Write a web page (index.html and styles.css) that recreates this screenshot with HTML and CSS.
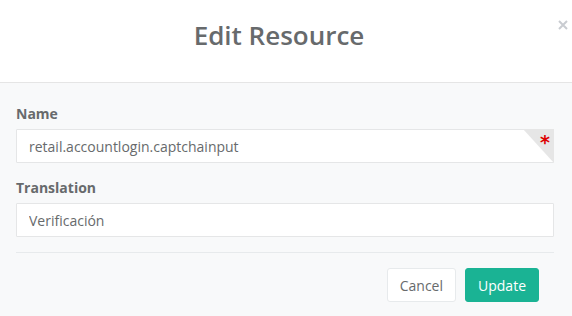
FILE: index.html
```html
<!DOCTYPE html>
<html lang="en">
<head>
    <meta charset="UTF-8">
    <meta name="viewport" content="width=device-width, initial-scale=1.0">
    <title>Edit Resource</title>
    <link rel="stylesheet" href="styles.css">
</head>
<body>
    <div class="modal">
        <!-- Header -->
        <div class="modal-header">
            <button class="close" type="button" aria-label="Close">
                <svg width="10" height="10" viewBox="0 0 10 10">
                    <path d="M1 1 L9 9 M9 1 L1 9" stroke="#c9ccd1" stroke-width="2" fill="none"/>
                </svg>
            </button>
            <h4 class="modal-title">Edit Resource</h4>
        </div>

        <!-- Body -->
        <div class="modal-body">
            <div class="form-group">
                <label for="name">Name</label>
                <div class="input-wrap">
                    <input type="text" id="name" class="form-control" value="retail.accountlogin.captchainput">
                    <span class="required-corner"></span>
                    <span class="required-star">*</span>
                </div>
            </div>
            <div class="form-group">
                <label for="translation">Translation</label>
                <input type="text" id="translation" class="form-control" value="Verificación">
            </div>
            <hr>
            <div class="modal-footer">
                <button class="btn btn-white" type="button">Cancel</button>
                <button class="btn btn-primary" type="button">Update</button>
            </div>
        </div>
    </div>
</body>
</html>
```

FILE: styles.css
```css
body {
    margin: 0;
    font-family: 'Open Sans', 'Liberation Sans', sans-serif;
    font-size: 14px;
    line-height: 20px;
    color: #676a6c;
    background-color: #f8f9fa;
}

.modal {
    width: 572px;
    height: 316px;
    overflow: hidden;
}

.modal-header {
    position: relative;
    background-color: #fff;
    padding: 21px 30px 32px 16px;
    border-bottom: 1px solid #e5e5e5;
    text-align: center;
}

.modal-title {
    margin: 0;
    font-size: 26px;
    line-height: 29px;
    font-weight: 600;
    color: #676a6c;
}

.close {
    position: absolute;
    top: 20px;
    right: 4px;
    width: 10px;
    height: 10px;
    padding: 0;
    border: none;
    background: none;
    cursor: pointer;
}

.close svg {
    display: block;
}

.modal-body {
    padding: 21px 18px 0 16px;
}

.form-group {
    margin-bottom: 15px;
}

label {
    display: block;
    margin-bottom: 5px;
    font-weight: 700;
    color: #676a6c;
}

.input-wrap {
    position: relative;
}

.form-control {
    display: block;
    width: 100%;
    height: 34px;
    padding: 6px 12px;
    box-sizing: border-box;
    border: 1px solid #e5e6e7;
    border-radius: 1px;
    background-color: #fff;
    font-family: inherit;
    font-size: 14px;
    color: #676a6c;
    outline: none;
}

.required-corner {
    position: absolute;
    top: 0;
    right: 0;
    width: 0;
    height: 0;
    border-top: 34px solid #e6e6e6;
    border-left: 31px solid transparent;
}

.required-star {
    position: absolute;
    top: 4px;
    right: 4px;
    color: #d00;
    font-size: 19px;
    font-weight: 700;
    line-height: 18px;
    font-family: 'DejaVu Sans', sans-serif;
}

hr {
    margin: 0 0 15px;
    border: none;
    border-top: 1px solid #e7eaec;
}

.modal-footer {
    display: flex;
    justify-content: flex-end;
    gap: 9px;
    padding-right: 15px;
}

.btn {
    height: 34px;
    padding: 6px 12px 6px;
    box-sizing: border-box;
    border-radius: 3px;
    font-family: inherit;
    font-size: 14px;
    line-height: 21px;
    cursor: pointer;
}

.btn-white {
    background-color: #fff;
    border: 1px solid #e7eaec;
    color: #676a6c;
}

.btn-primary {
    background-color: #1ab394;
    border: 1px solid #1ab394;
    color: #fff;
}
```
